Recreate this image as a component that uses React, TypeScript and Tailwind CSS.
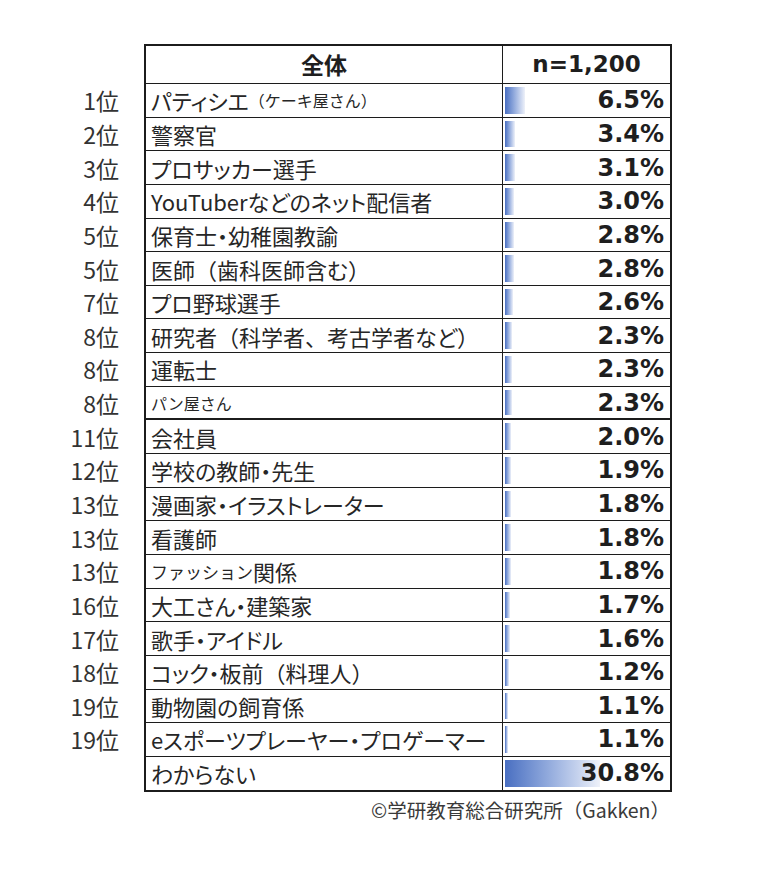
import type { ReactNode } from "react";

interface Row {
  rank: string;
  label: ReactNode;
  value: number;
}

const MAX_BAR = 95; // px width of the 30.8% bar
const MAX_VALUE = 30.8;

// kana are proportional, brackets and commas stay full width
function jpText(text: string): ReactNode {
  return text.split(/([（）、])/).map((part, i) =>
    /^[（）、]$/.test(part) ? (
      <span key={i} className="[font-feature-settings:normal]">
        {part}
      </span>
    ) : (
      part
    ),
  );
}

const ROWS: Row[] = [
  {
    rank: "1位",
    label: (
      <>
        パティシエ<span className="text-[16px] [font-feature-settings:normal]">（ケーキ屋さん）</span>
      </>
    ),
    value: 6.5,
  },
  { rank: "2位", label: "警察官", value: 3.4 },
  { rank: "3位", label: "プロサッカー選手", value: 3.1 },
  { rank: "4位", label: "YouTuberなどのネット配信者", value: 3.0 },
  { rank: "5位", label: "保育士・幼稚園教諭", value: 2.8 },
  { rank: "5位", label: jpText("医師（歯科医師含む）"), value: 2.8 },
  { rank: "7位", label: "プロ野球選手", value: 2.6 },
  { rank: "8位", label: jpText("研究者（科学者、考古学者など）"), value: 2.3 },
  { rank: "8位", label: "運転士", value: 2.3 },
  { rank: "8位", label: <span className="text-[16px] [font-feature-settings:normal]">パン屋さん</span>, value: 2.3 },
  { rank: "11位", label: "会社員", value: 2.0 },
  { rank: "12位", label: "学校の教師・先生", value: 1.9 },
  { rank: "13位", label: "漫画家・イラストレーター", value: 1.8 },
  { rank: "13位", label: "看護師", value: 1.8 },
  {
    rank: "13位",
    label: (
      <>
        <span className="text-[17px] [font-feature-settings:normal]">ファッション</span>関係
      </>
    ),
    value: 1.8,
  },
  { rank: "16位", label: "大工さん・建築家", value: 1.7 },
  { rank: "17位", label: "歌手・アイドル", value: 1.6 },
  { rank: "18位", label: jpText("コック・板前（料理人）"), value: 1.2 },
  { rank: "19位", label: "動物園の飼育係", value: 1.1 },
  { rank: "19位", label: "eスポーツプレーヤー・プロゲーマー", value: 1.1 },
  { rank: "", label: "わからない", value: 30.8 },
];

const jp = "[font-family:'Noto_Sans_CJK_JP','Noto_Sans',sans-serif]";
const num = "[font-family:'DejaVu_Sans','Noto_Sans_CJK_JP',sans-serif]";

function TableRow({ row, last, thick }: { row: Row; last: boolean; thick: boolean }) {
  const barWidth = Math.max(2, (row.value / MAX_VALUE) * MAX_BAR);
  const bottom = last || thick ? "border-b-2" : "border-b-[1.5px]";
  return (
    <div className={`flex ${last ? "h-[35px]" : "h-[33.65px]"}`}>
      <div className={`${jp} flex w-[144px] shrink-0 items-center justify-end pr-[25px] text-[23px] leading-none text-[#333]`}>
        {row.rank}
      </div>
      <div
        className={`${jp} flex w-[358px] shrink-0 items-center overflow-hidden whitespace-nowrap border-l-2 border-[#1c1c1c] pl-[5px] text-[22px] leading-none text-[#262626] [font-feature-settings:'palt'] ${bottom}`}
      >
        {row.label}
      </div>
      <div className={`grid w-[170px] shrink-0 border-l-[1.5px] border-r-2 border-[#1c1c1c] ${bottom}`}>
        <div className="col-start-1 row-start-1 flex items-stretch py-[3px] pl-[2px]">
          <div className="bg-gradient-to-r from-[#4a6fc1] to-[#eef1f9]" style={{ width: `${barWidth}px` }} />
        </div>
        <div className={`${num} col-start-1 row-start-1 flex items-center justify-end pr-[6px] text-[24px] font-bold leading-none text-[#1e1e1e]`}>
          {row.value.toFixed(1)}%
        </div>
      </div>
    </div>
  );
}

export default function App() {
  return (
    <div className="h-[869px] w-[774px] bg-white pt-[44px]">
      <div className="flex h-[40px]">
        <div className="w-[144px] shrink-0" />
        <div className={`${jp} flex w-[358px] shrink-0 items-center justify-center border-b-[1.5px] border-l-2 border-t-2 border-[#1c1c1c] text-[23px] font-bold text-[#1e1e1e]`}>
          全体
        </div>
        <div className={`${num} flex w-[170px] shrink-0 items-center justify-center border-b-[1.5px] border-l-[1.5px] border-r-2 border-t-2 border-[#1c1c1c] text-[23px] font-bold text-[#1e1e1e]`}>
          n=1,200
        </div>
      </div>
      {ROWS.map((row, i) => (
        <TableRow key={i} row={row} last={i === ROWS.length - 1} thick={i === 9} />
      ))}
      <div className="flex w-[672px] justify-end pr-[2px] pt-[8px]">
        <span className={`${jp} text-[19.5px] leading-none text-[#3a3a3a]`}>©学研教育総合研究所（Gakken）</span>
      </div>
    </div>
  );
}
